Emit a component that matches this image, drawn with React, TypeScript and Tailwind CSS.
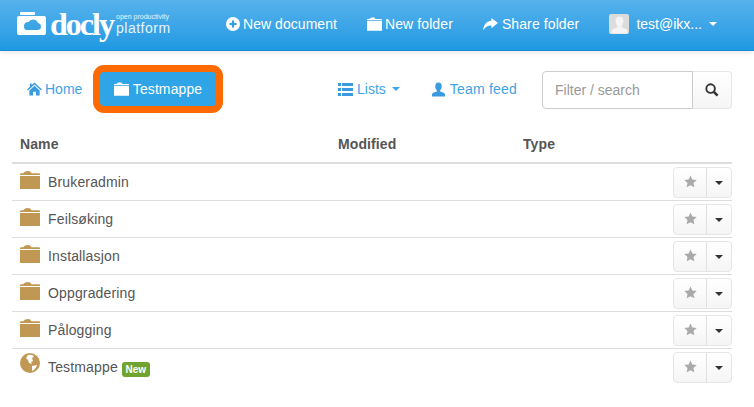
const ROWS = ["Brukeradmin", "Feilsøking", "Installasjon", "Oppgradering", "Pålogging"];

function FolderIcon({ className }: { className: string }) {
  return (
    <svg viewBox="0 0 20 18" className={className} fill="currentColor">
      <path d="M0 3.200 Q0 2.200 1 2.200 L3 2.200 Q5 0 8 0 Q10.500 0 11.500 2.200 L19 2.200 Q20 2.200 20 3.200 L20 4 L0 4 Z" />
      <rect x="0" y="5" width="20" height="13" />
    </svg>
  );
}

function Caret({ className }: { className: string }) {
  return <span className={`inline-block w-0 h-0 border-x-[4px] border-x-transparent border-t-[4px] ${className}`} />;
}

function PersonIcon({ className }: { className: string }) {
  return (
    <svg viewBox="0 0 16 16" className={className} fill="currentColor">
      <path d="M8 0.500C10.200 0.500 11.500 2.200 11.500 4.500 11.500 6.500 10.600 8 9.800 8.800V10C11.500 10.800 15 11.200 15 13.500V15.500H1V13.500C1 11.200 4.500 10.800 6.200 10V8.800C5.400 8 4.500 6.500 4.500 4.500 4.500 2.200 5.800 0.500 8 0.500Z" />
    </svg>
  );
}

function RowButtons() {
  return (
    <div className="flex h-[31px] w-[59px] rounded-[4px] border border-[#e6e6e6] bg-gradient-to-b from-white to-[#f5f5f5]">
      <div className="w-[33px] flex items-center justify-center border-r border-[#e0e0e0]">
        <svg viewBox="0 0 24 24" className="w-[13px] h-[13px] text-[#aaaaaa] mt-[-2px]" fill="currentColor">
          <path d="M12 1l3.400 7.400 8.100.9-6 5.500 1.700 8L12 18.700 4.800 22.800l1.700-8-6-5.500 8.100-.9z" />
        </svg>
      </div>
      <div className="flex-1 flex items-center justify-center">
        <Caret className="border-t-[#333333]" />
      </div>
    </div>
  );
}

function Row({ name, isNew }: { name: string; isNew?: boolean }) {
  return (
    <div className="h-[37px] pl-[8px] flex items-start border-b border-[#dddddd] last:border-b-0">
      {isNew ? (
        <svg viewBox="0 0 20 20" className="w-[20px] h-[20px] mt-[4px]">
          <circle cx="10" cy="10" r="10" fill="#c09853" />
          <path d="M8 2 Q11 1 14 3 Q13 5 12 5 L13 8 L11 9 L12 11 L9 10 L8 7 L6 5 Z M12 13 L17 12 Q16 16 12 18 Z" fill="#ffffff" />
        </svg>
      ) : (
        <FolderIcon className="w-[20px] h-[18px] mt-[7px] text-[#c09853]" />
      )}
      <span className="ml-[8px] mt-[8px] leading-[20px] text-[14px] tracking-[0.15px] text-[#555555]">{name}</span>
      {isNew && (
        <span className="ml-[4px] mt-[13px] h-[15px] w-[28px] rounded-[3px] bg-[#6fa52e] text-white text-[10px] font-bold leading-[15px] text-center">
          New
        </span>
      )}
      <div className="ml-auto mt-[3px]">
        <RowButtons />
      </div>
    </div>
  );
}

export default function App() {
  return (
    <div className="w-[754px] h-[407px] overflow-hidden bg-white font-['Liberation_Sans',Arial,sans-serif]">
      <header className="h-[51px] border-b border-[#1b8bd0] bg-gradient-to-b from-[#55b2ec] to-[#1d99e2] shadow-[0_1px_6px_rgba(0,0,0,0.12)] flex items-center text-white text-[14px]">
        <div className="w-[226px] pl-[17px] flex items-center">
          <svg viewBox="0 0 29 23" className="w-[29px] h-[23px] mt-[-3px]" fill="#ffffff">
            <rect x="3" y="0" width="15" height="3" rx="1" />
            <path fillRule="evenodd" d="M2 4h25q2 0 2 2v15q0 2-2 2H2q-2 0-2-2V6q0-2 2-2z M9 18h11q4 0 4-3.500 0-3-3-3.500-1-3.500-5-3.500-3 0-4.500 2.500-4.500 0-4.500 4 0 4 2.500 4z" />
          </svg>
          <span className="ml-[4px] w-[66px] font-['Liberation_Serif',serif] font-bold text-[32px] leading-none tracking-[-2px] mt-[-3px]">docly</span>
          <div className="flex flex-col mt-[-2px]">
            <span className="text-[7px] leading-[8px] text-[#e6f4fd]">open productivity</span>
            <span className="text-[14px] leading-[14px] tracking-[0.5px] text-[#e6f4fd]">platform</span>
          </div>
        </div>
        <nav className="flex items-center pb-[2px]">
          <div className="flex items-center gap-[3px]">
            <svg viewBox="0 0 14 14" className="w-[14px] h-[14px]">
              <circle cx="7" cy="7" r="7" fill="#ffffff" />
              <path d="M3.500 7h7M7 3.500v7" stroke="#2f9fe4" strokeWidth="2.200" />
            </svg>
            <span className="tracking-[0.05px]">New document</span>
          </div>
          <div className="ml-[30px] flex items-center gap-[3px]">
            <FolderIcon className="w-[15px] h-[14px] text-white" />
            <span className="tracking-[0.1px]">New folder</span>
          </div>
          <div className="ml-[30px] flex items-center gap-[4px]">
            <svg viewBox="0 0 16 14" className="w-[15px] h-[13px]" fill="#ffffff">
              <path d="M9 0L16 5.500 9 11V8C5.500 8 2.500 9 0 13.500 0.500 7.500 3.500 3.500 9 3z" />
            </svg>
            <span className="tracking-[0.1px]">Share folder</span>
          </div>
          <div className="ml-[30px] flex items-center">
            <div className="w-[20px] h-[20px] rounded-[2px] bg-[#dcdcdc] overflow-hidden flex items-end justify-center">
              <PersonIcon className="w-[19px] h-[18px] text-[#f4f4f4]" />
            </div>
            <span className="ml-[7px]">test@ikx...</span>
            <Caret className="ml-[7px] border-t-white" />
          </div>
        </nav>
      </header>

      <div className="h-[76px] pl-[27px] pr-[22px] flex items-center text-[14px] text-[#3fa4e8]">
        <div className="flex items-center gap-[3px] w-[66px]">
          <svg viewBox="0 0 16 14" className="w-[15px] h-[14px] text-[#3b9be0]" fill="currentColor">
            <path d="M8 0L16 7.500 15 8.500 8 2.200 1 8.500 0 7.500 3 4.700V1H5V2.800Z" />
            <path d="M8 3.500L13.500 8.500V14H9.500V10H6.500V14H2.500V8.500Z" />
          </svg>
          <span>Home</span>
        </div>
        <div className="w-[130px] h-[48px] rounded-[11px] border-[7px] border-[#ff6a00] bg-[#2fa4e7] flex items-center justify-center gap-[4px] text-white">
          <FolderIcon className="w-[15px] h-[14px] text-white" />
          <span className="tracking-[0.1px]">Testmappe</span>
        </div>
        <div className="ml-[115px] flex items-center gap-[4px]">
          <svg viewBox="0 0 15 13" className="w-[15px] h-[13px] text-[#3b9be0]" fill="currentColor">
            <rect x="0" y="0" width="3" height="3" />
            <rect x="4" y="0" width="11" height="3" />
            <rect x="0" y="5" width="3" height="3" />
            <rect x="4" y="5" width="11" height="3" />
            <rect x="0" y="10" width="3" height="3" />
            <rect x="4" y="10" width="11" height="3" />
          </svg>
          <span>Lists</span>
          <Caret className="ml-[2px] border-t-[#3fa4e8]" />
        </div>
        <div className="ml-[31px] flex items-center gap-[4px]">
          <PersonIcon className="w-[15px] h-[15px] text-[#3b9be0]" />
          <span className="tracking-[0.2px]">Team feed</span>
        </div>
        <div className="ml-auto flex h-[38px] mt-[2px]">
          <div className="w-[151px] rounded-l-[4px] border border-[#cccccc] pl-[12px] flex items-center text-[14px] text-[#999999]">
            Filter / search
          </div>
          <div className="w-[39px] rounded-r-[4px] border border-l-0 border-[#e6e6e6] bg-gradient-to-b from-white to-[#f5f5f5] flex items-center justify-center">
            <svg viewBox="0 0 15 15" className="w-[14px] h-[14px] text-[#333333]" fill="none" stroke="currentColor">
              <circle cx="6" cy="6" r="4.600" strokeWidth="2" />
              <path d="M9.500 9.500L13.500 13.500" strokeWidth="2.800" />
            </svg>
          </div>
        </div>
      </div>

      <div className="ml-[12px] w-[720px]">
        <div className="h-[37px] border-b-2 border-[#dddddd] flex items-center text-[14px] font-bold text-[#555555]">
          <span className="w-[326px] pl-[8px] tracking-[0.1px]">Name</span>
          <span className="w-[185px] tracking-[0.1px]">Modified</span>
          <span className="tracking-[0.1px]">Type</span>
        </div>
        {ROWS.map((r) => (
          <Row key={r} name={r} />
        ))}
        <div className="border-t border-[#dddddd] mt-[-1px]">
          <Row name="Testmappe" isNew />
        </div>
      </div>
    </div>
  );
}
